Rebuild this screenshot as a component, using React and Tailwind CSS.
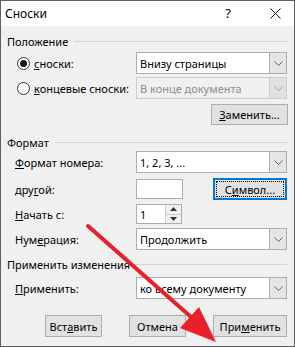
import React from 'react';

const font = { fontFamily: '"Noto Sans", "Liberation Sans", sans-serif' };

const Chevron = ({ color = '#606060' }) => (
    <svg width="9" height="5" viewBox="0 0 9 5" fill="none">
        <path d="M0.5 0.5 L4.5 4.5 L8.5 0.5" stroke={color} strokeWidth="1" />
    </svg>
);

const Select = ({ value, disabled }) => (
    <div
        className={
            'flex h-[22px] w-[151px] border ' +
            (disabled ? 'border-[#cccccc] bg-[#f0f0f0] text-[#8d8d8d]' : 'border-[#adadad] bg-white text-black')
        }
    >
        <div className="flex flex-1 items-center whitespace-nowrap pl-[3px] leading-none">{value}</div>
        <div
            className={
                'flex w-[17px] items-center justify-center border-l ' +
                (disabled ? 'border-[#cccccc] bg-[#e0e0e0]' : 'border-[#adadad] bg-[#e5e5e5]')
            }
        >
            <Chevron color={disabled ? '#a8a8a8' : '#606060'} />
        </div>
    </div>
);

const Button = ({ children, className = '' }) => (
    <div className={'flex items-center justify-center whitespace-nowrap border border-[#adadad] bg-[#e1e1e1] leading-none ' + className}>
        {children}
    </div>
);

const Section = ({ title, className = '' }) => (
    <div className={'flex h-[16px] items-center pl-[6px] pr-[7px] ' + className}>
        <span className="whitespace-nowrap leading-none">{title}</span>
        <div className="ml-[6px] h-px flex-1 bg-[#d5d5d5]" />
    </div>
);

const Row = ({ label, children, className = '' }) => (
    <div className={'flex items-center pl-[14px] ' + className}>
        <div className="w-[121px] whitespace-nowrap leading-none">{label}</div>
        {children}
    </div>
);

const Radio = ({ checked }) => (
    <div className="flex h-[13px] w-[13px] shrink-0 items-center justify-center rounded-full border border-[#333333] bg-white">
        {checked && <div className="h-[7px] w-[7px] rounded-full bg-[#1a1a1a]" />}
    </div>
);

export default function App() {
    return (
        <div className="relative h-[347px] w-[295px] overflow-hidden border border-[#5f5f5f] bg-[#f0f0f0] text-[11px] text-black" style={font}>
            {/* title bar */}
            <div className="flex h-[25px] items-center bg-white">
                <span className="pl-[4px] text-[12px] leading-none">Сноски</span>
                <span className="ml-auto mr-[39px] text-[13px] leading-none">?</span>
                <svg className="mr-[13px]" width="11" height="11" viewBox="0 0 11 11">
                    <path d="M0.5 0.5 L10.5 10.5 M10.5 0.5 L0.5 10.5" stroke="#111" strokeWidth="1" />
                </svg>
            </div>

            <Section title="Положение" className="mt-[7px]" />

            <div className="mt-[3px] flex h-[22px] items-center">
                <div className="flex w-[135px] items-center pl-[16px]">
                    <Radio checked />
                    <span className="ml-[4px] whitespace-nowrap leading-none"><u>с</u>носки:</span>
                </div>
                <Select value="Внизу страницы" />
            </div>
            <div className="mt-[3px] flex h-[22px] items-center">
                <div className="flex w-[135px] items-center pl-[16px]">
                    <Radio />
                    <span className="ml-[4px] whitespace-nowrap leading-none"><u>к</u>онцевые сноски:</span>
                </div>
                <Select value="В конце документа" disabled />
            </div>
            <div className="mt-[5px] flex justify-end pr-[6px]">
                <Button className="h-[21px] w-[77px]"><span><u>З</u>аменить...</span></Button>
            </div>

            <Section title="Формат" className="mt-[9px]" />

            <Row label={<><u>Ф</u>ормат номера:</>} className="mt-[1px] h-[22px]">
                <Select value="1, 2, 3, ..." />
            </Row>
            <Row label={<>дру<u>г</u>ой:</>} className="mt-[5px] h-[22px]">
                <div className="h-[20px] w-[47px] border border-[#adadad] bg-white" />
                <div className="ml-[30px] flex h-[22px] w-[74px] items-center justify-center border-2 border-[#0078d7] bg-[#e1e1e1] p-px">
                    <div className="flex h-full w-full items-center justify-center border border-dotted border-black leading-none">
                        <span>С<u>и</u>мвол...</span>
                    </div>
                </div>
            </Row>
            <Row label={<><u>Н</u>ачать с:</>} className="mt-[4px] h-[20px]">
                <div className="flex h-[20px] w-[46px] border border-[#adadad] bg-white">
                    <div className="flex flex-1 items-center pl-[3px] leading-none">1</div>
                    <div className="flex w-[16px] flex-col border-l border-[#d0d0d0] bg-[#f0f0f0]">
                        <div className="flex flex-1 items-center justify-center border-b border-[#d0d0d0]">
                            <svg width="7" height="4" viewBox="0 0 7 4"><path d="M0 4 L3.5 0 L7 4 Z" fill="#333" /></svg>
                        </div>
                        <div className="flex flex-1 items-center justify-center">
                            <svg width="7" height="4" viewBox="0 0 7 4"><path d="M0 0 L3.5 4 L7 0 Z" fill="#333" /></svg>
                        </div>
                    </div>
                </div>
            </Row>
            <Row label={<>Нум<u>е</u>рация:</>} className="mt-[4px] h-[22px]">
                <Select value="Продолжить" />
            </Row>

            <Section title="Применить изменения" className="mt-[6px]" />

            <Row label={<><u>П</u>рименить:</>} className="mt-[5px] h-[22px]">
                <Select value="ко всему документу" />
            </Row>

            <div className="mt-[16px] flex justify-end gap-[27px] pr-[7px]">
                <Button className="h-[22px] w-[57px]"><span>Вст<u>а</u>вить</span></Button>
                <Button className="h-[22px] w-[57px]">Отмена</Button>
                <Button className="h-[22px] w-[74px]"><span>При<u>м</u>енить</span></Button>
            </div>

            {/* red annotation arrow */}
            <svg className="pointer-events-none absolute left-0 top-0" width="295" height="347" viewBox="0 0 295 347">
                <line x1="87" y1="225" x2="190" y2="316" stroke="#e8202a" strokeWidth="4" strokeLinecap="round" />
                <polygon points="215,341 179,327 198,306" fill="#e8202a" />
            </svg>
        </div>
    );
}
